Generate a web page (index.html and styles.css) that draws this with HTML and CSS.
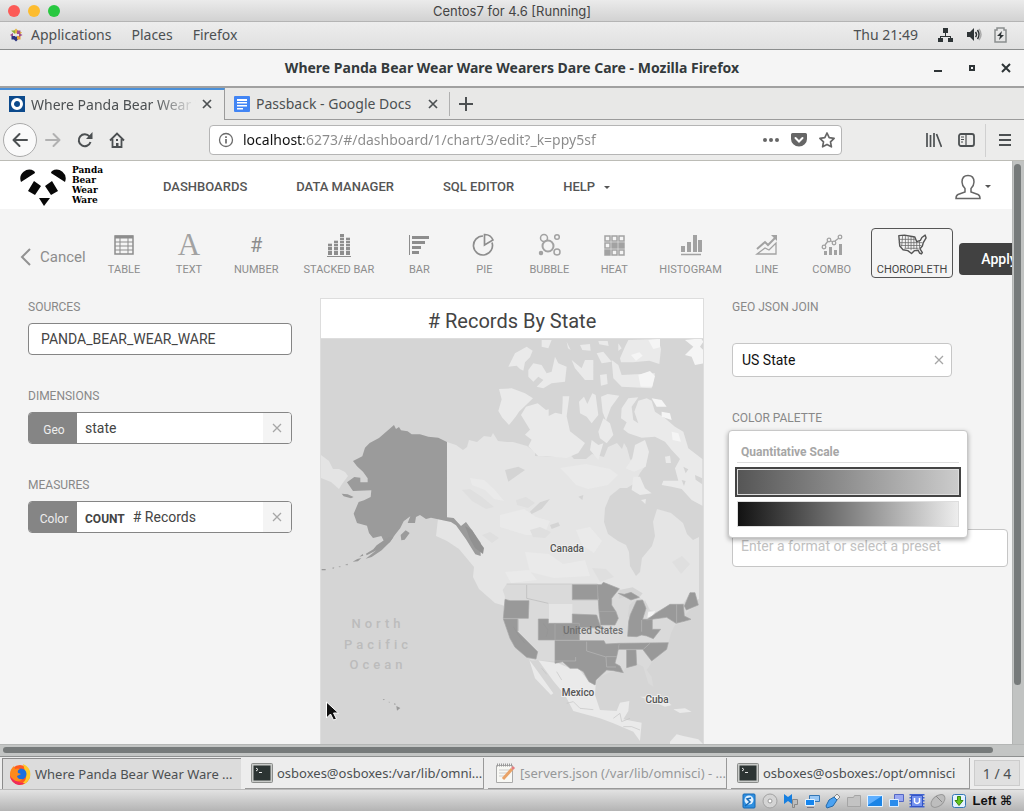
FILE: index.html
```html
<!DOCTYPE html>
<html lang="en">
<head>
<meta charset="utf-8">
<title>Where Panda Bear Wear Ware Wearers Dare Care</title>
<link rel="stylesheet" href="styles.css">
</head>
<body>
<header class="mac-title">
  <div class="lights"><button class="light red" aria-label="Close VM"></button><button class="light amber" aria-label="Minimize VM"></button><button class="light green" aria-label="Zoom VM"></button></div>
  <span>Centos7 for 4.6 [Running]</span>
</header>

<nav class="gnome-bar">
  <svg width="14" height="14" viewBox="0 0 14 14"><path fill="#e2b646" d="M7 6 4.500 3 7 .5 9.500 3zM11 7V3.500L12 4h1L11 7z"/><path fill="#8fae3a" d="M2.500 2.500H6V6L2.500 3z"/><path fill="#a14f8d" d="M8 6V2.500h3.500L11 6zM1 7l3-2v4z"/><path fill="#2c3480" d="M2.500 8H6v3.500H2.500zM7 8l2.500 3L7 13.500 4.500 11z"/><path fill="#e5a13c" d="M8 8h3.500v3.500H8z"/><path fill="#a14f8d" d="M13.500 7 10 9V5z"/></svg>
  <a href="#apps">Applications</a><a href="#places">Places</a><a href="#firefox">Firefox</a>
  <span class="spacer"></span>
  <time>Thu 21:49</time>
  <svg class="net" width="16" height="16" viewBox="0 0 16 16" fill="#2e3436"><path d="M5 1h5v5H5zM0 11h5v4H0zM10 11h5v4h-5zM7 6h1v3h5v2h-1v-1H3v1H2V9h5z"/></svg>
  <svg class="vol" width="16" height="16" viewBox="0 0 16 16"><path fill="#2e3436" d="M1 5h3l4-4v13L4 10H1z"/><g fill="none" stroke="#2e3436" stroke-width="1.500"><path d="M9.500 5q2 2.500 0 5M11.500 3q3 4.500 0 9"/><path stroke="#aaa" d="M13 2q4 5.500 0 11"/></g></svg>
  <svg width="13" height="16" viewBox="0 0 13 16"><path fill="none" stroke="#8b8e8f" stroke-width="1.500" d="M1 3h2V1h7v2h2v12H1z"/><path fill="#2e3436" d="M8 4 3 9h3l-1 4 5-5H7z"/></svg>
</nav>

<div class="win-title">
  <h1>Where Panda Bear Wear Ware Wearers Dare Care - Mozilla Firefox</h1>
  <div class="win-buttons">
    <button aria-label="Minimize"><svg width="10" height="10"><path fill="#2e3436" d="M1 7h8v2H1z"/></svg></button>
    <button aria-label="Maximize"><svg width="10" height="10"><path fill="none" stroke="#2e3436" stroke-width="2" d="M3 3h4v4H3z"/></svg></button>
    <button aria-label="Close"><svg width="10" height="10"><path stroke="#2e3436" stroke-width="2" d="m1 1 8 8M9 1 1 9"/></svg></button>
  </div>
</div>

<div class="tabs">
  <div class="tab active">
    <svg width="16" height="16"><path fill="#0c4a8c" d="M0 0h16v16H0z"/><circle cx="8" cy="8" r="4.500" fill="none" stroke="#fff" stroke-width="3"/></svg>
    <span class="tab-name fade">Where Panda Bear Wear W</span>
    <button class="tab-x" aria-label="Close tab"><svg width="10" height="10"><path stroke="#4c5052" stroke-width="1.700" d="m1 1 8 8M9 1 1 9"/></svg></button>
  </div>
  <div class="tab">
    <svg width="16" height="16"><rect width="16" height="16" rx="1" fill="#4285f4"/><path fill="#fff" d="M3 3h10v2H3zM3 6h10v1.500H3zM3 9h10v1.500H3zM3 12h6v1.500H3z"/></svg>
    <span class="tab-name">Passback - Google Docs</span>
    <button class="tab-x" aria-label="Close tab"><svg width="10" height="10"><path stroke="#4c5052" stroke-width="1.700" d="m1 1 8 8M9 1 1 9"/></svg></button>
  </div>
  <button class="new-tab" aria-label="New tab"><svg width="14" height="14"><path stroke="#4c5052" stroke-width="2" d="M7 0v14M0 7h14"/></svg></button>
</div>

<div class="nav-bar">
  <button class="back" aria-label="Back"><svg width="16" height="16" fill="none" stroke="#4c5052" stroke-width="2" stroke-linecap="round" stroke-linejoin="round"><path d="M15 8H2M7.500 2 1.500 8l6 6"/></svg></button>
  <button aria-label="Forward"><svg width="16" height="16" fill="none" stroke="#b1b1b1" stroke-width="2" stroke-linecap="round" stroke-linejoin="round"><path d="M1 8h13M8.500 2l6 6-6 6"/></svg></button>
  <button class="reload" aria-label="Reload"><svg width="16" height="16" fill="none" stroke="#4c5052" stroke-width="2"><path d="M12.500 4.500a6 6 0 1 0 1 5.500"/><path fill="#4c5052" stroke="none" d="M15.500 0v7H9z"/></svg></button>
  <button class="home" aria-label="Home"><svg width="16" height="16" fill="none" stroke="#4c5052" stroke-width="1.800"><path d="m1 8.500 7-7 7 7M3.500 7v8h9V7"/><path fill="#4c5052" stroke="none" d="M7 11h2.500v4H7zM7 7h2v2H7z"/></svg></button>
  <div class="url-box">
    <svg width="16" height="16" fill="none" stroke="#6b6b6b"><circle cx="8" cy="8" r="6.500" stroke-width="1.300"/><path stroke-width="1.700" d="M8 7v4.500M8 4.300V6"/></svg>
    <input class="url" type="text" aria-label="Address" value="localhost:6273/#/dashboard/1/chart/3/edit?_k=ppy5sf">
    <svg width="16" height="16" fill="#666"><circle cx="2" cy="8" r="2"/><circle cx="8" cy="8" r="2"/><circle cx="14" cy="8" r="2"/></svg>
    <svg width="16" height="16"><path fill="#666" d="M1.500 1h13A1.500 1.500 0 0 1 16 2.500V7A8 7.500 0 0 1 0 7V2.500A1.500 1.500 0 0 1 1.500 1z"/><path fill="none" stroke="#fff" stroke-width="2" stroke-linecap="round" d="m4.500 6 3.500 3.500L11.500 6"/></svg>
    <svg width="16" height="16"><path fill="none" stroke="#666" stroke-width="1.700" stroke-linejoin="round" d="m8 1 2.200 4.600 4.900.7-3.600 3.500.9 5L8 12.400 3.600 14.800l.9-5L.9 6.300l4.900-.7z"/></svg>
  </div>
  <div class="nav-tools">
    <button aria-label="Library"><svg width="16" height="16" stroke="#4c5052" stroke-width="1.700"><path d="M1 1v14M4.500 3v12M8 1v14M10.500 2l5 13"/></svg></button>
    <button aria-label="Sidebars"><svg width="17" height="16" fill="none" stroke="#4c5052"><rect x="1" y="2" width="15" height="12" rx="2" stroke-width="1.800"/><path stroke-width="1.200" d="M8 2v12M3 5h3M3 7.500h3M3 10h2"/></svg></button>
    <button class="menu" aria-label="Menu"><svg width="14" height="14" stroke="#4c5052" stroke-width="2"><path d="M1 2h12M1 7h12M1 12h12"/></svg></button>
  </div>
</div>

<div class="viewport">
  <main class="page">
    <header class="site-head">
      <a class="logo" href="#home" aria-label="Panda Bear Wear Ware">
        <svg width="46" height="38" viewBox="0 0 46 38" fill="#080808"><path d="M1 14A9 9 0 0 1 14 3q1 1 1 2zM45 14A9 9 0 0 0 32 3q-1 1-1 2zM14 13l7 5-6 9-7-4zM32 13l-7 5 6 9 7-4zM19 30h11l-6 8z"/></svg>
        <span>Panda<br>Bear<br>Wear<br>Ware</span>
      </a>
      <nav class="site-nav"><a href="#d">DASHBOARDS</a><a href="#m">DATA MANAGER</a><a href="#s">SQL EDITOR</a><a href="#h">HELP <i class="caret"></i></a></nav>
      <button class="user" aria-label="Account"><svg width="26" height="26" viewBox="0 0 26 26" fill="none" stroke="#666" stroke-width="1.500"><path d="M13 1.500c4 0 6 2.500 6 6.500 0 3-1.500 5-3 6.500V18l7 2.500c1.500.6 2 2 2 4H1c0-2 .5-3.400 2-4L10 18v-3.500C8.500 13 7 11 7 8c0-4 2-6.500 6-6.500z"/></svg><i class="caret"></i></button>
    </header>

    <div class="chart-bar">
      <a class="cancel" href="#cancel"><svg width="11" height="18" fill="none" stroke="#929292" stroke-width="2"><path d="M10 1 2 9l8 8"/></svg>Cancel</a>
      <div class="types">
        <button><svg width="26" height="26" fill="none" stroke="#8d8d8d"><path stroke-width="1.500" d="M4 4h18v18H4z"/><path stroke-width="3" d="M4 5h18"/><path d="M4 10h18M4 14h18M4 18h18M9 6v16M17 6v16"/></svg>TABLE</button>
        <button><span class="glyph-a">A</span>TEXT</button>
        <button><span class="glyph-n">#</span>NUMBER</button>
        <button><svg width="26" height="26" stroke="#8d8d8d"><path stroke-width="4" d="M4 11v12M10 8v15M16 2v21M22 5v18"/><path stroke="#f4f4f4" stroke-width=".7" d="M1 14.500h24M1 18.500h24M1 11.500h24M1 8.500h24M1 5.500h24"/><path d="M1 24.500h24"/></svg>STACKED BAR</button>
        <button><svg width="26" height="26" stroke="#8d8d8d"><path d="M3.500 3v20"/><path stroke-width="3" d="M6 5.500h17M6 10.500h13M6 15.500h9M6 20.500h7"/></svg>BAR</button>
        <button><svg width="26" height="26" fill="none" stroke="#8d8d8d" stroke-width="1.700"><path d="M12 4a9.500 9.500 0 1 0 9 6.500"/><path d="M13.500 13V2.500A9 9 0 0 1 22 8z"/></svg>PIE</button>
        <button><svg width="26" height="26" fill="none" stroke="#a2a2a2" stroke-width="1.500"><circle cx="12" cy="14" r="5.500" stroke-width="2"/><circle cx="8" cy="6" r="3.500"/><circle cx="21" cy="5" r="2.300"/><circle cx="21" cy="20" r="3"/><circle cx="5" cy="21" r="1.500" fill="#a2a2a2"/></svg>BUBBLE</button>
        <button><svg width="26" height="26" fill="#a2a2a2" stroke="#a2a2a2" stroke-width="1.500"><path fill="none" d="M4 4h5v5H4zM11 4h5v5h-5zM18 4h5v5h-5zM4 11h5v5H4zM11 18h5v5h-5zM18 18h5v5h-5z"/><path d="M11 11h5v5h-5zM18 11h5v5h-5zM4 18h5v5H4z"/></svg>HEAT</button>
        <button><svg width="26" height="26" stroke="#a2a2a2"><path stroke-width="4" d="M5 14v6M11 10v10M17 3v17M22 8v12"/><path d="M3 22.500h20" stroke-width="1.500"/></svg>HISTOGRAM</button>
        <button><svg width="26" height="26" fill="none" stroke="#a2a2a2" stroke-width="2"><path d="m3 17 8-7 3 3 8-8"/><path fill="#a2a2a2" stroke="none" d="M17 3h6v6z"/><path stroke-width="1.300" d="m3 22 8-6 4 2 7-7v11z"/></svg>LINE</button>
        <button><svg width="26" height="26" fill="none" stroke="#a2a2a2"><path stroke-width="3" d="M6.500 19v4M11.500 15v8M16.500 18v5M21.500 12v11"/><g stroke-width="1.300"><circle cx="5" cy="15" r="1.800"/><circle cx="10" cy="8" r="1.800"/><circle cx="15" cy="11" r="1.800"/><circle cx="21" cy="5" r="1.800"/><path d="m6 13 3-4M12 9l2 1M16 9l4-3"/></g></svg>COMBO</button>
        <button class="chosen"><svg width="32" height="26" viewBox="-1 0 34 27" fill="none" stroke="#555"><path stroke-width="1.500" stroke-linejoin="round" d="M2 3.500 8 3l8 1.500 3 .5 2 5 4-1.500 1.500-3L30 3l1 3-3 5-1 3.500-2.500 3 2.500 4-1 1.500-2-1-1.500-3-4 .5-3 3-4-3-5-1-3.500-4z"/><path stroke-width=".8" stroke="#666" d="M6 4 5 15M9 4v13M12 4.500v13M15 5v14M18 5v13M21 10v8M24 9v8M2 7.500h17M2 11h25M4 14h22M8 17h15"/></svg>CHOROPLETH</button>
      </div>
      <button class="apply">Apply</button>
    </div>

    <div class="editor">
      <section class="panel">
        <div class="group"><label for="src">SOURCES</label><div class="field"><input id="src" value="PANDA_BEAR_WEAR_WARE"></div></div>
        <div class="group"><label for="dim">DIMENSIONS</label><div class="field"><span class="tag">Geo</span><input id="dim" class="tight" value="state"><button class="clear" aria-label="Remove dimension"><svg width="10" height="10"><path stroke="#a6a6a6" stroke-width="1.300" d="m1 1 8 8M9 1 1 9"/></svg></button></div></div>
        <div class="group"><label for="mea">MEASURES</label><div class="field"><span class="tag">Color</span><b class="agg">COUNT</b><input id="mea" class="tight" value="# Records"><button class="clear" aria-label="Remove measure"><svg width="10" height="10"><path stroke="#a6a6a6" stroke-width="1.300" d="m1 1 8 8M9 1 1 9"/></svg></button></div></div>
      </section>

      <section class="chart">
        <h2># Records By State</h2>
        <svg class="map" viewBox="321 339 382 405" preserveAspectRatio="xMidYMin slice">
          <!-- Siberia -->
          <path fill="#e4e4e4" d="m321 455 8 6 4 8 6 0 6 3 3 4-6 8-3 5-8-7-10-4z"/>
          <!-- Canada -->
          <path fill="#e5e5e5" d="M447 442l9 3 7 5 4-3 2-7 8 2 7-6 7 1 2-4 5 8 9 1 6 0 14 4 8 6 0 4 22 1 9-7 8 9 12 0 6-5 12 3 4-10 9-4 5 6 2-6 3 5 3 11 5 6 7-7 4 7-6 8-5 10-8 5L620 488l-10 8-5 12-1 14 4 12 10 7 8 4 3 7 1 14 6 10 4-4 2-14 10-12 3-10-2-14 4-13 14 4 12 10 4 11 6 6 6-3v62l-12 5-14 8-24 14-40-10-40-10-64 0-10-3-16-14-6-12 1-10-15-18-12-8-11-5z"/>
          <g fill="#eaeaea"><path d="m470 478 14 2 10 9 10 12-10-2-9-9-13-5zM500 515l24-6 12 8 14 4-6 14-18 0-26-8zM560 468l26-4 24 5 8 6-10 10-20 4-12-4-8-9zM525 552l24 2 14 10 22-4 5 16-36 2-24-6zM576 530l14-3 12 14-8 12-12-8zM505 572l24-2 8 10-26 3z"/></g>
          <g fill="#dfdfdf"><path d="m462 490 8-1 12 8 12 10-8 2-14-8zM516 500l10-3 9 6-7 5-11-3zM530 530l10-3 11 5-6 6-12-1zM592 568l14 1 8 8-14 5zM672 562l10-6 8 8-9 10zM482 535l8-3 9 6-7 5z"/></g>
          <g transform="translate(505 335) scale(.3333)">
            <g fill="#eaeaea">
              <path d="M10 95 30 55 65 35l18 12-8 20-15 15-5 25-10-5-10-10zM70 105l15-20 25 5 15 25 15-5 10-45 10 20 25 10-5 45-40 5-25 15-20-5 20-20-15-10-15 15-15-15zM110 15h30l-10 25-20-5zM185 20l12 25-8-5zM200 75l30 25 10-25 25 0v60l-25 0-30-35zM225 30l30-3 2 20-25-2zM275 55l20-5 25 30-30 5zM285 120l20-3 3 30-20 5zM280 18h28l3 15-28-5zM340 25l10 15-10 8zM345 70l15-35 10-20 90-3 8 30-5 45-30-10-50 5-35 0zM320 75l20 15 10 30 100-5-10 45-90-5-25-25z"/>
              <path d="M-18 162 20 160l40 15 24 15-42 40-10 15-20 25-20-22-12-20 10-35zM48 240l15-25 35-10 25 20 8-2 0 20 20-10 20 5 2-40 0-14 20 0-8 60 10 45 45 35-20 30-35 15-60-5-25 0-30-30 10-20-20-15 15-15zM222 200l15-15 10 22 15-32 10 5 8 60-20 25-15-20-20-10zM288 185l20-8 35 5-25 35-15 40-10-25zM280 290l15-40 20 15 10 35-20 25-20-15zM255 345l5-30 20 15 15-5-15 50z"/>
              <path d="M350 220 370 190 400 187 380 215 385 255 400 265 388 230 400 197 425 190 440 197 450 230 480 250 510 275 535 290 550 340 592 372 592 512 560 495 530 462 500 455 470 450 475 437 520 437 510 400 525 372 500 345 480 320 450 305 410 308 370 295 355 283 365 262 348 250z"/>
              <path d="m390 330 30-15 12 35-10 45-35 15-25-10 20-30zM385 425l20 0 15 35 20 15-35 5-25-15zM480 365l15-3 3 22-15 0zM408 495l15-3-2 15z"/>
            </g>
            <g fill="#f5f5f5"><path d="m400 120 35-12 15 15-8 32-35 0zM378 60l25-8 10 10-20 15zM430 15l35-3 0 25-20 5zM440 190l30 5 15 20-30 0zM470 230l25 5 5 20-30-10zM500 290l20 5 8 25-25-5zM540 15l48-5 7 10-10 15 10 10 0 40-25 5-10-25-20-5 15-15 10-10z"/></g>
            <g fill="#d4d4d4"><path d="m0 405 40-10 20 10-50 35zM75 530l30-28 30-10-25 30-30 15zM135 570l25-8 5 10-25 10zM220 485l15-5-3 15zM535 395l15 8-8 12zM530 435l12 3-5 15zM570 420l22 10 0 18-20-14z"/></g>
          </g>
          <!-- Alaska and the Aleutians -->
          <g transform="translate(320 335) scale(.3333)" fill="#9b9b9b">
            <path d="m222 270 6 12 9-6 6 10 20 3 12 9 25 0 25 7 30 3 26 13v226l20 2 22 24 15-12 22 30 22 32 0 40-16-5-28-45-30-42-15-10-25-5-35-8-15 4-18-12-12 6-3 18-22 0 8-20-20 15-10 20-16 20-15 22-25 25-30 20-18 5 30-24 25-28-8-16-25 6-12-15-6-22-30-8-10-28 15-35 16-5 20-10 2-20-55 2-18-26 22-16 18 2 0 14 22 0 0-12-14-20-18-16-12-16 28-14 8-26 14-14 28-15z"/>
            <path d="m242 600 15-14 12 8-15 20-10 2zM65 476l18 2 18 8-8 4-22-6zM112 550l14-3 4 8-12 3z"/>
          </g>
          <g transform="translate(320 540) scale(.3333)" fill="#999">
            <path d="m220-8-15 0-35 24-10 12-22 13 2 5 24-12 26-14 20-14zM118 50l10-8 2 5zM98 65l14-8 12-3-10 10zM75 75l8-4 0 5zM55 81l6-3 0 4zM35 84l8-2-2 4zM5 87l12 0 0 4-12 0zM188 477l6 0-2 4zM206 485l4 1-3 2zM222 490l6 2-4 3zM229 498l12 6-10 8z"/>
          </g>
          <g transform="translate(490 560) scale(.3333)">
            <!-- Contiguous states -->
            <path fill="#dadada" d="M50 72h290l5-4 40 17 15 10 40 10 30 25 10 20 20 5 30-15 50-10 20-32h15l10 37-25 15-15 15 5 20-35 10-10 20-10 33-45 52-20 30 15 20 5 30-15-10-15-50-20-10-35 15-5 10-35 0-35 15-15 25-25-25-25-25-25 5-25-25-75-5-60-35L40 180l5-70-7-20z"/>
            <path fill="none" stroke="#c6c6c6" stroke-width="2" d="M50 72h272"/>
            <path fill="#e5e5e5" d="M177 132h70v57h-70z"/>
            <!-- Mexico and Central America -->
            <path fill="#eaeaea" d="m115 297 90 13 35 15 25 0 32 40 20 10-2 30 15 45 50 3 10-25 28-5-3 30-15 25 55 10-5 55-20-28-60-25-40-15-80-22-25-48-35-42-45-62-20 0zM118 300l22 30 50 70-7 5-48-50zM450 410l50 0 45 25-20 5-35-15zM550 448l35-3 20 10-35 4zM540 545l20-22 20 5 45 10 15 15H540z"/>
            <path fill="#f4f4f4" d="m475 155 22-2-10 15-15 5z"/>
            <path fill="#d5d5d5" d="m388 90 40-8 30 18-10 12-22-8-40 12zM418 135l18-15 5 10-20 40-8 0zM465 120l10 25-8 25-10-30zM470 175l30-12-5 8-20 10z"/>
            <g fill="#999" stroke="#a6a6a6" stroke-width="2">
              <path d="m45 118 15 4h57l-2 53H40zM40 177h43v38l60 60-5 22-28-5-35-30-15-27zM247 74h75l2 45h-77zM322 74l12 0 6-7 48 19-23 29v20l13 20h-51zM327 155h51l7 20-10 20h-43zM247 162l73 3 10 30 5 8h-67v-13h-21zM145 177h30v13h20v50h-50zM195 190h73v50h-73z"/>
              <path d="M195 242h147l5 10 41-2-3 18-5 22-5 20 15 8 10 20-30-6-20-2-32 30-3 15-18-10-17-30-18-10-22 0-22-20-23 5z"/>
              <path d="m440 122 18-2 10 25-10 33 29 0v30l25 0-22 28-20-8-15-3-15 5-27-1 3-45 5-20zM385 100l18 3 20-6 25 15-25 8zM470 180l30-22 40-25h40l3 35 20 10-20 6-25 6-28-18zM583 138l17-40h15l10 37-36 15zM388 250l147-2-5 20-45 35-27-35h-73zM410 270h28l2 45-30 8z"/>
            </g>
            <path fill="none" stroke="#b8b8b8" stroke-width="2" d="M290 245v28l58 18 2 30h28M195 303h62v-12M348 290h32M460 268l20-18M560 133v57M455 180v35M110 75v40l65 15M85 178v35M268 203h75M327 119h-80"/>
            <path fill="none" stroke="#8f8f8f" stroke-width="1" d="m160 190 14 20-5 20M215 195l10 15-4 18M70 200l15 25 20 25"/>
            <path fill="none" stroke="#c4c4c4" stroke-width="2" d="m155 325 15 18M200 335l15 25M370 475l20-15 5 25 25-10M230 430l20-5 20 20 40 4M400 500l25 0 25 10"/>
          </g>
          <path fill="#919191" d="m465 526 7 4 6 10 6 8-1 6-8-6-5-9z"/>
          <g class="place"><text x="567" y="552">Canada</text><text class="dim" x="593" y="634">United States</text><text x="578" y="696">Mexico</text><text x="657" y="703">Cuba</text></g>
          <g class="ocean"><text x="378" y="628">North</text><text x="378" y="649">Pacific</text><text x="378" y="669">Ocean</text></g>
          <path fill="#111" stroke="#fff" d="M326.500 702v16l4-4 3 6 3-1-3-6h5z"/>
        </svg>
      </section>

      <section class="panel side">
        <div class="group geo"><label for="geo">GEO JSON JOIN</label><div class="combo"><input id="geo" value="US State"><button class="clear" aria-label="Clear join"><svg width="10" height="10"><path stroke="#a6a6a6" stroke-width="1.300" d="m1 1 8 8M9 1 1 9"/></svg></button></div></div>
        <div class="palette">
          <h3>COLOR PALETTE</h3>
          <div class="pop">
            <h4>Quantitative Scale</h4>
            <button class="ramp mid picked" aria-label="Mid grey ramp"></button>
            <button class="ramp full" aria-label="Full grey ramp"></button>
          </div>
        </div>
        <input class="format" aria-label="Format" placeholder="Enter a format or select a preset">
      </section>
    </div>
  </main>
  <div class="vscroll"><div class="vthumb"></div></div>
</div>
<div class="hscroll"><div class="hthumb"></div></div>

<footer class="taskbar">
  <button class="task current"><svg width="22" height="22"><circle cx="11" cy="12" r="10" fill="#ff5a1f"/><path fill="#ffc928" d="M14 1q9 4 7 13-2 7-10 8 7-4 6-10z"/><path fill="#ef2b5b" d="M1 11q0 9 9 11 4 0 6-2-9 1-12-8z"/><circle cx="12" cy="11" r="5.500" fill="#1c6fe0"/><path fill="#ff8a1c" d="M1 12Q1 6 5 3l1 3q3-1 5 0-3 1-2 4l3 1-4 2q1 4 6 3-5 4-9 1t-4-5z"/></svg><span>Where Panda Bear Wear Ware ...</span></button>
  <button class="task"><svg width="22" height="22"><rect x=".5" y="1.500" width="21" height="19" rx="1" fill="#c9cbc9" stroke="#8b8d8b"/><path fill="#2c3433" d="M2.500 3.500h17v15h-17z"/><path fill="none" stroke="#e8e8e8" d="m5 6 2 1.500L5 9M8 10.500h3"/></svg><span>osboxes@osboxes:/var/lib/omni...</span></button>
  <button class="task muted"><svg width="22" height="22"><path fill="#f8f8f4" stroke="#aaa" d="M2.500 3.500h16v17h-16z"/><path stroke="#999" stroke-dasharray="1 1" stroke-width="3" d="M3 3h15"/><path stroke="#ccc" d="M5 8h11M5 11h8M5 14h6"/><path stroke="#e9a368" stroke-width="3" d="m9 17 9-10"/><path stroke="#e58080" stroke-width="3" d="m18 7 2-2"/></svg><span>[servers.json (/var/lib/omnisci) - ...</span></button>
  <button class="task"><svg width="22" height="22"><rect x=".5" y="1.500" width="21" height="19" rx="1" fill="#c9cbc9" stroke="#8b8d8b"/><path fill="#2c3433" d="M2.500 3.500h17v15h-17z"/><path fill="none" stroke="#e8e8e8" d="m5 6 2 1.500L5 9M8 10.500h3"/></svg><span>osboxes@osboxes:/opt/omnisci</span></button>
  <button class="workspace">1 / 4</button>
</footer>

<div class="vm-status">
  <svg width="16" height="16"><rect x="2" y="1" width="12" height="14" rx="1" fill="#2e8fe0" stroke="#1669b5"/><circle cx="8" cy="7" r="4.500" fill="#dff0ff"/><path stroke="#1669b5" stroke-width="1.500" fill="none" d="m4 13 5-4-3-3 4-1"/></svg>
  <svg width="16" height="16"><circle cx="8" cy="8" r="7" fill="#d4d4d4" stroke="#a2a2a2"/><circle cx="8" cy="8" r="2" fill="#fff" stroke="#999"/></svg>
  <svg width="16" height="16"><path fill="#167fe0" d="M1 1l4 3 4-3v10L5 8l-4 3z"/><path fill="#bdbdbd" stroke="#888" d="M9.500 6.500h5v5h-3v3h-2z"/></svg>
  <svg width="16" height="16"><path fill="#9ac8f5" stroke="#3577b6" d="M5.500 2.500h10v6h-10z"/><path fill="#1585ee" stroke="#e4f2ff" d="M1.500 6.500h9v6h-9z"/><path stroke="#778" d="M3 14.500h7"/></svg>
  <svg width="16" height="16"><path fill="#eee" stroke="#888" d="m9 4 3-3 3 3-3 3z"/><path fill="#4ba2f2" stroke="#2468a8" d="m4 7 5-3 3 3-4 6-6 2-1-2z"/></svg>
  <svg width="16" height="16"><path fill="#c3c3c3" stroke="#a5a5a5" d="M1.500 4.500h6l1-2h6v11h-13z"/></svg>
  <svg width="16" height="16"><path fill="#1b84e6" stroke="#e4f2ff" d="M.5 2.500h15v11H.5z"/><path fill="#5eafff" d="M1 3h14L1 12z"/></svg>
  <svg width="16" height="16"><path fill="#9aa8f2" stroke="#5467c4" d="M6.500 1.500h9v7h-9z"/><path fill="#2a8cec" stroke="#dcecff" d="M1.500 6.500h9v7h-9z"/></svg>
  <svg width="16" height="16"><path stroke="#4264cf" stroke-dasharray="1.500 1.500" stroke-width="15" d="M8 1v14" fill="none"/><path fill="#7492ef" stroke="#3454c4" d="M2.500 2.500h11v11h-11z"/><path fill="none" stroke="#fff" stroke-width="1.500" d="M5.500 5v4q2.500 3 5 0V5"/></svg>
  <svg width="16" height="16"><ellipse cx="8" cy="8" rx="8" ry="5" transform="rotate(-40 8 8)" fill="#bdbdbd" stroke="#9a9a9a"/><path stroke="#888" d="m6 3 6 6"/></svg>
  <svg width="16" height="16"><rect x="1.500" y="1.500" width="13" height="13" rx="2" fill="#e4f1ff" stroke="#3577b6"/><path fill="#64c31d" stroke="#388810" d="M6.500 3.500h3v4h2.500l-4 5-4-5h2.500z"/></svg>
  <b>Left ⌘</b>
</div>
</body>
</html>
```
FILE: styles.css
```css
* { box-sizing: border-box; }
body {
  margin: 0;
  height: 100vh;
  display: flex;
  flex-direction: column;
  overflow: hidden;
  background: #ececeb;
  font-family: Roboto, "Liberation Sans", sans-serif;
  color: #444;
}
button { border: 0; padding: 0; background: none; font: inherit; color: inherit; display: flex; align-items: center; justify-content: center; }
input { font: inherit; color: inherit; border: 0; min-width: 0; outline: 0; }
a { color: inherit; text-decoration: none; }
svg { flex: none; display: block; }
h1, h2, h3, h4 { margin: 0; font-weight: 400; }

/* VM window chrome */
.mac-title {
  flex: none;
  height: 22px;
  display: grid;
  grid-template-columns: 1fr auto 1fr;
  align-items: center;
  background: linear-gradient(#ebebeb, #d2d2d2);
  border-bottom: 1px solid #b4b4b4;
  font: 13px Inter, sans-serif;
}
.lights { display: flex; gap: 8px; padding-left: 8px; }
.light { width: 12px; height: 12px; border-radius: 50%; }
.red { background: #fc5b57; }
.amber { background: #fdbc2e; }
.green { background: #28c840; }

.gnome-bar {
  flex: none;
  height: 28px;
  display: flex;
  align-items: center;
  gap: 20px;
  padding: 0 17px 2px 9px;
  background: linear-gradient(#ededed, #e0e0e0);
  border-bottom: 1px solid #8b8d8d;
  font: 14px "Noto Sans", sans-serif;
  color: #4c5052;
}
.gnome-bar > svg:first-child { margin-right: -12px; }
.gnome-bar .net, .gnome-bar .vol { margin-right: -8px; }
.spacer { flex: 1; }

.win-title {
  flex: none;
  height: 38px;
  display: flex;
  align-items: center;
  background: #f5f5f5;
  border-bottom: 2px solid #a1a1a1;
  position: relative;
}
.win-title h1 { flex: 1; text-align: center; font: bold 14px "Noto Sans", sans-serif; color: #343a3c; padding-bottom: 2px; }
.win-buttons { position: absolute; right: 13px; display: flex; gap: 24px; }

.tabs { flex: none; height: 32px; display: flex; background: #e8e8e7; }
.tab {
  width: 225px;
  display: flex;
  align-items: center;
  gap: 6px;
  padding: 0 12px 0 9px;
  border-bottom: 1px solid #9b9b9b;
  font: 14px "Noto Sans", sans-serif;
  color: #4c5052;
}
.tab.active { background: #ececeb; border-top: 2px solid #4a90d9; border-bottom: 0; border-right: 1px solid #9b9b9b; padding-bottom: 2px; }
.tab-name { flex: 1; overflow: hidden; white-space: nowrap; }
.fade { -webkit-mask-image: linear-gradient(90deg, #000 75%, transparent); mask-image: linear-gradient(90deg, #000 75%, transparent); }
.new-tab { flex: 1; justify-content: flex-start; padding-left: 8px; border-bottom: 1px solid #9b9b9b; }
.new-tab::before { content: ""; height: 24px; border-left: 1px solid #b0b0b0; margin-left: -9px; margin-right: 9px; }

.nav-bar {
  flex: none;
  height: 41px;
  display: flex;
  align-items: center;
  gap: 16px;
  padding: 0 12px 0 3px;
  border-bottom: 1px solid #bcbcb6;
}
.back { width: 34px; height: 34px; border: 1px solid #aaa; border-radius: 50%; background: #fafafa; margin-right: -8px; }
.url-box {
  flex: 1;
  height: 30px;
  margin: 0 68px;
  display: flex;
  align-items: center;
  gap: 12px;
  padding: 0 6px 0 8px;
  background: #fff;
  border: 1px solid #b5b5b5;
  border-radius: 4px;
}
.url {
  flex: 1;
  margin-left: -3px;
  padding: 0 0 2px;
  height: 28px;
  font: 14px "Noto Sans", sans-serif;
  color: transparent;
  background: linear-gradient(90deg, #111 61px, #8a8a8a 61px);
  -webkit-background-clip: text;
  background-clip: text;
}
.nav-tools { display: flex; align-items: center; gap: 16px; }
.menu { height: 33px; border-left: 1px solid #d0d0d0; padding-left: 12px; margin-left: -6px; }

/* Browser page */
.viewport { flex: 1; min-height: 0; display: flex; }
.page { flex: 1; min-width: 0; overflow: hidden; background: #f4f4f4; display: flex; flex-direction: column; }
.vscroll { width: 12px; background: #c1c3c2; border-left: 1px solid #b4b6b5; padding: 3px 2px 59px 1px; display: flex; }
.vthumb { width: 7px; border-radius: 4px; background: #767a7a; }
.hscroll { flex: none; height: 13px; background: #c3c5c4; border-bottom: 1px solid #8e9090; padding: 2px 31px 3px 3px; border-top: 1px solid #b4b6b5; }
.hthumb { height: 6px; border-radius: 3px; background: #767a7a; }

.site-head { flex: none; height: 48px; background: #fff; display: flex; align-items: center; padding: 3px 21px 0 20px; }
.logo { display: flex; align-items: center; gap: 6px; font: 900 9px/10px "DejaVu Serif", serif; color: #000; width: 143px; }
.logo span { padding-bottom: 4px; }
.site-nav { display: flex; gap: 49px; flex: 1; font-weight: 500; font-size: 13px; color: #555; }
.caret { display: inline-block; border: 3px solid transparent; border-top-color: #555; border-bottom: 0; margin-left: 6px; vertical-align: middle; }
.user .caret { margin-left: 4px; }

.chart-bar { flex: none; height: 89px; display: flex; align-items: center; padding: 1px 0 3px 20px; white-space: nowrap; }
.cancel { display: flex; align-items: center; gap: 9px; font-size: 15px; color: #8d8d8d; width: 78px; flex: none; padding-top: 8px; }
.types { display: flex; gap: 13px; flex: none; }
.types button {
  flex-direction: column;
  justify-content: flex-start;
  min-width: 52px;
  height: 50px;
  padding: 3px 5px 0;
  border: 1px solid transparent;
  border-radius: 4px;
  font-size: 11px;
  line-height: 24px;
  color: #8d8d8d;
}
.types .chosen { border-color: #555; color: #444; }
.glyph-a { font: 31px/26px "Liberation Serif", serif; color: #a2a2a2; }
.glyph-n { font: 20px/26px Roboto, sans-serif; }
.apply { flex: none; height: 32px; margin: 12px 0 0 6px; padding: 0 22px; border-radius: 4px; background: #414141; color: #fff; font-size: 14px; font-weight: 500; }

.editor { flex: 1; min-height: 0; display: grid; grid-template-columns: 264px minmax(0, 1fr) 276px; grid-template-rows: minmax(0, 1fr); gap: 28px; padding: 0 4px 0 28px; }
.panel { display: flex; flex-direction: column; gap: 32px; }
.group { display: flex; flex-direction: column; gap: 7px; }
label, h3 { font-size: 12px; line-height: 18px; color: #888; }
.field { height: 32px; display: flex; border: 1px solid #858585; border-radius: 4px; background: #fff; overflow: hidden; align-items: stretch; }
.field input { flex: 1; font-size: 14px; padding: 0 12px; background: none; }
.field input.tight { padding: 0 8px; }
.tag { width: 48px; background: #858585; color: #eee; font-size: 12px; display: flex; align-items: center; justify-content: center; padding: 3px 0 0 2px; }
.agg { font-size: 12px; padding: 9px 0 0 8px; line-height: 16px; }
.clear { width: 28px; }
.field .clear { background: #f4f4f4; }

.chart { display: flex; flex-direction: column; border: 1px solid #ddd; border-bottom: 0; background: #fff; }
.chart h2 { flex: none; height: 40px; line-height: 44px; font-size: 20px; text-align: center; border-bottom: 1px solid #ddd; }
.map { flex: 1; min-height: 0; width: 100%; background: #d5d5d5; }
.place { font: 500 10px Roboto, sans-serif; text-anchor: middle; fill: #555; stroke: #eee; stroke-width: 2px; paint-order: stroke; }
.place .dim { fill: #707070; stroke: none; }
.ocean { font: 500 13px Roboto, sans-serif; letter-spacing: 4px; text-anchor: middle; fill: #bcbcbc; }

.side { gap: 32px; color: #111; }
.geo { gap: 27px; }
.combo { width: 220px; height: 34px; display: flex; background: #fff; border: 1px solid #c6c6c6; border-radius: 4px; }
.combo input { flex: 1; background: none; padding: 0 0 0 9px; font-size: 14px; }
.combo .clear { width: 24px; }
.palette { position: relative; }
.pop {
  position: absolute;
  z-index: 1;
  left: -4px;
  top: 21px;
  width: 240px;
  padding: 12px 7px 10px;
  background: #fff;
  border: 1px solid #c8c8c8;
  border-radius: 4px;
  box-shadow: 0 2px 5px #0005;
}
.pop h4 { font-size: 12px; font-weight: 700; line-height: 18px; color: #a6a6a6; padding: 0 4px 1px; margin: 0 1px 6px; border-bottom: 1px solid #ddd; }
.ramp { display: block; width: 222px; height: 26px; margin: 0 1px; border: 1px solid #ddd; background-origin: border-box; }
.picked { outline: 2px solid #444; margin: 6px 1px; }
.mid { background-image: linear-gradient(90deg, #555, #ccc); }
.full { background-image: linear-gradient(90deg, #111, #eee); }
.format { width: 100%; height: 38px; margin-top: 70px; flex: none; padding: 0 8px 4px; font-size: 14px; background: #fff; border: 1px solid #c6c6c6; border-radius: 4px; }
.format::placeholder { color: #c2c2c2; }

/* Desktop task list */
.taskbar { flex: none; height: 32px; display: flex; gap: 4px; padding: 1px 4px 0 2px; background: #ededed; font: 13px "Noto Sans", sans-serif; color: #4c5052; }
.task { flex: 1; min-width: 0; justify-content: flex-start; gap: 4px; padding-left: 6px; border-right: 1px solid #999; border-bottom: 1px solid #999; }
.task span { white-space: nowrap; }
.current { background: #dcdcdc; border: 1px solid #8b8b8b; border-width: 1px 0 0 1px; }
.muted { color: #969899; }
.workspace { width: 46px; margin: 2px 0 3px; border: 1px solid #ccc; background: #e0e0e0; font-size: 14px; }

.vm-status { flex: none; height: 22px; display: flex; align-items: center; justify-content: flex-end; gap: 5px; padding-right: 12px; background: linear-gradient(#e2e2e2, #b4b4b4); border-top: 1px solid #bbb; font: bold 13px "Liberation Sans", "DejaVu Sans", sans-serif; color: #111; }
```
